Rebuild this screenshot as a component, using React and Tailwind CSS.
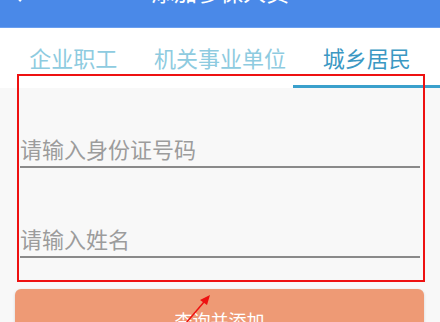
import React from "react";

const tabs = ["企业职工", "机关事业单位", "城乡居民"];

export default function App() {
  const active = 2;

  return (
    <div
      className="relative w-[440px] h-[322px] overflow-hidden bg-[#f8f8f8]"
      style={{ fontFamily: '"Noto Sans CJK SC", "Noto Sans", sans-serif' }}
    >
      {/* top bar, title mostly scrolled away */}
      <div className="relative h-[28px] bg-[#4a89e8] overflow-hidden border-b border-[#6a9ff0]">
        <div className="-mt-[16px] h-[14px] flex items-center justify-center text-white text-[23px] leading-[14px]">
          添加参保人员
        </div>
        <svg className="absolute left-[12px] -top-[16px]" width="20" height="20" viewBox="0 0 20 20">
          <path d="M18 10H3M9 3l-7 7 7 7" stroke="#fff" strokeWidth="2.5" fill="none" />
        </svg>
      </div>

      {/* tabs */}
      <div className="flex h-[60px] bg-white">
        {tabs.map((t, i) => (
          <div key={t} className="flex-1 flex flex-col">
            <div
              className={
                "flex-1 flex items-center justify-center text-[22px] pt-[2px] " +
                (i === active ? "text-[#3b98c3]" : "text-[#8ecbe0]")
              }
            >
              {t}
            </div>
            <div className={"h-[3px] " + (i === active ? "bg-[#3aa0cc]" : "bg-transparent")} />
          </div>
        ))}
      </div>

      {/* form */}
      <div className="px-[20px] pt-[45px]">
        <div className="border-b-2 border-[#8a8a8a] pb-[3px]">
          <div className="text-[22px] leading-[30px] text-[#9c9c9c]">请输入身份证号码</div>
        </div>
        <div className="mt-[55px] border-b-2 border-[#8a8a8a] pb-[3px]">
          <div className="text-[22px] leading-[30px] text-[#9c9c9c]">请输入姓名</div>
        </div>
      </div>

      <div className="ml-[15px] mt-[31px] w-[409px] h-[60px] rounded-[6px] bg-[#ee9a75] shadow-[0_1px_3px_rgba(0,0,0,0.15)] flex justify-center pt-[21px]">
        <span className="text-white text-[18px] leading-[20px]">查询并添加</span>
      </div>

      {/* red annotation box and arrow */}
      <div className="absolute left-[17px] top-[74px] w-[408px] h-[208px] border-2 border-[#ee1111] pointer-events-none" />
      <svg className="absolute left-0 top-0 pointer-events-none" width="440" height="322">
        <line x1="186" y1="323" x2="204" y2="302" stroke="#ee1111" strokeWidth="1.5" />
        <polygon points="210,295 207,305 200,300" fill="#ee1111" />
      </svg>
    </div>
  );
}
